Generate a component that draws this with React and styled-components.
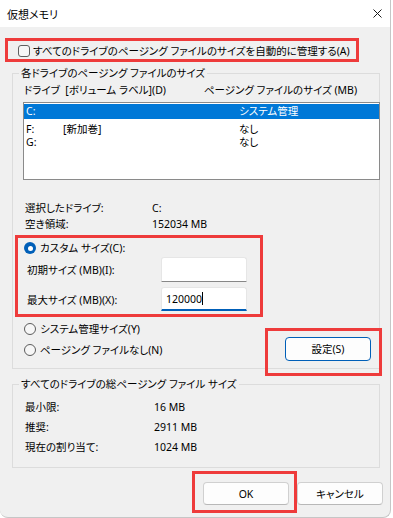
import React from "react";
import styled, { createGlobalStyle } from "styled-components";

const GlobalStyle = createGlobalStyle`
  html, body { margin: 0; padding: 0; background: #ffffff; }
  body {
    font-family: "Noto Sans", "Noto Sans CJK JP", sans-serif;
    font-size: 10.5px;
    color: #000000;
    font-feature-settings: "palt";
    -webkit-font-smoothing: antialiased;
  }
  * { box-sizing: border-box; }
`;

const Window = styled.div`
  width: 391px;
  height: 518px;
  background: #f0f0f0;
  border-right: 1px solid #c6c6c6;
  border-bottom: 1px solid #c6c6c6;
  border-radius: 0 0 8px 8px;
  overflow: hidden;
  display: flex;
  flex-direction: column;
`;

const TitleBar = styled.div`
  height: 27px;
  flex: none;
  background: #ffffff;
  display: flex;
  align-items: center;
  justify-content: space-between;
  padding: 0 8px 0 7px;
  font-size: 11px;
`;

const Content = styled.div`
  display: flex;
  flex-direction: column;
  padding: 17px 10px 0 12px;
`;

const Highlight = styled.div`
  position: relative;
  &::after {
    content: "";
    position: absolute;
    top: -${(p) => p.$t}px;
    right: -${(p) => p.$r}px;
    bottom: -${(p) => p.$b}px;
    left: -${(p) => p.$l}px;
    border: 3px solid #ee3b3b;
    pointer-events: none;
  }
`;

const CheckHighlight = styled(Highlight)`
  align-self: flex-start;
  margin-left: 6px;
`;

const CheckRow = styled.label`
  display: flex;
  align-items: center;
  gap: 3px;
  height: 14px;
  line-height: 14px;
  white-space: nowrap;
`;

const CheckBox = styled.span`
  width: 12px;
  height: 12px;
  border: 1px solid #5f5f5f;
  border-radius: 3px;
  background: #f6f6f6;
  flex: none;
`;

const GroupBox = styled.div`
  position: relative;
  margin-top: ${(p) => p.$mt}px;
  border: 1px solid #dcdcdc;
  padding: ${(p) => p.$pad};
`;

const Legend = styled.span`
  position: absolute;
  top: -8px;
  left: 6px;
  padding: 0 2px;
  line-height: 14px;
  background: #f0f0f0;
  white-space: nowrap;
`;

const HeaderRow = styled.div`
  display: grid;
  grid-template-columns: 180px 1fr;
  height: 14px;
  line-height: 14px;
  padding-left: 1px;
  white-space: nowrap;
`;

const ListBox = styled.div`
  margin-top: 5px;
  margin-right: -1px;
  height: 78px;
  border: 1px solid #8a8a8a;
  background: #ffffff;
  padding: 1px 0;
`;

const ListRow = styled.div`
  display: grid;
  grid-template-columns: 37px 176px 1fr;
  padding-left: 2px;
  height: ${(p) => (p.$selected ? 15 : 13)}px;
  line-height: ${(p) => (p.$selected ? 15 : 13)}px;
  margin-top: ${(p) => p.$mt || 0}px;
  background: ${(p) => (p.$selected ? "#0078d7" : "transparent")};
  color: ${(p) => (p.$selected ? "#ffffff" : "#000000")};
  white-space: nowrap;
`;

const InfoList = styled.div`
  margin-top: ${(p) => p.$mt}px;
  display: flex;
  flex-direction: column;
`;

const InfoRow = styled.div`
  display: grid;
  grid-template-columns: ${(p) => p.$label}px 1fr;
  height: ${(p) => p.$h}px;
  line-height: ${(p) => p.$h}px;
  padding-left: ${(p) => p.$pl}px;
  white-space: nowrap;
`;

const CustomBlock = styled(Highlight)`
  margin-top: 9px;
  width: 224px;
  display: flex;
  flex-direction: column;
`;

const RadioRow = styled.label`
  display: flex;
  align-items: center;
  gap: 4px;
  height: 14px;
  line-height: 14px;
  padding-left: 1px;
  white-space: nowrap;
`;

const Radio = styled.span`
  width: 12px;
  height: 12px;
  border-radius: 50%;
  flex: none;
  display: flex;
  align-items: center;
  justify-content: center;
  border: ${(p) => (p.$checked ? "none" : "1px solid #5c5c5c")};
  background: ${(p) => (p.$checked ? "#005fb8" : "#f6f6f6")};
  &::after {
    content: "";
    display: ${(p) => (p.$checked ? "block" : "none")};
    width: 5px;
    height: 5px;
    border-radius: 50%;
    background: #ffffff;
  }
`;

const FieldRow = styled.div`
  display: grid;
  grid-template-columns: 138px 86px;
  align-items: center;
  margin-top: ${(p) => p.$mt}px;
`;

const FieldLabel = styled.span`
  padding-left: 4px;
  white-space: nowrap;
`;

const Field = styled.div`
  height: ${(p) => (p.$focused ? 24 : 25)}px;
  background: #ffffff;
  border: 1px solid #e6e6e6;
  border-bottom: ${(p) => (p.$focused ? "2px solid #005fb8" : "1px solid #878787")};
  border-radius: 3px 3px 0 0;
  padding-left: 4px;
  display: flex;
  align-items: center;
  line-height: 14px;
`;

const Caret = styled.span`
  width: 1px;
  height: 13px;
  background: #000000;
`;

const BottomRow = styled.div`
  margin-top: 11px;
  display: flex;
  justify-content: space-between;
  align-items: flex-end;
  padding-right: 8px;
`;

const RadioColumn = styled.div`
  display: flex;
  flex-direction: column;
  gap: 7px;
  padding-bottom: 4px;
`;

const Button = styled.button`
  width: 86px;
  height: ${(p) => p.$h}px;
  padding: 0;
  font: inherit;
  color: #000000;
  background: #fdfdfd;
  border: 1px solid ${(p) => (p.$default ? "#005fb8" : "#d0d0d0")};
  border-bottom-color: ${(p) => (p.$default ? "#005fb8" : "#b8b8b8")};
  border-radius: 4px;
  line-height: 14px;
`;

const Footer = styled.div`
  margin-top: 14px;
  margin-right: -3px;
  display: flex;
  justify-content: flex-end;
  gap: 8px;
`;

const CloseIcon = () => (
  <svg width="9" height="9" viewBox="0 0 9 9">
    <path d="M0.5 0.5 L8.5 8.5 M8.5 0.5 L0.5 8.5" stroke="#1a1a1a" strokeWidth="1" fill="none" />
  </svg>
);

export default function App() {
  return (
    <>
      <GlobalStyle />
      <Window>
        <TitleBar>
          <span>仮想メモリ</span>
          <CloseIcon />
        </TitleBar>
        <Content>
          <CheckHighlight $t={6} $r={9} $b={4} $l={13}>
            <CheckRow>
              <CheckBox />
              <span>すべてのドライブのページング ファイルのサイズを自動的に管理する(A)</span>
            </CheckRow>
          </CheckHighlight>

          <GroupBox $mt={15} $pad="9px 0 7px 10px">
            <Legend>各ドライブのページング ファイルのサイズ</Legend>
            <HeaderRow>
              <span>ドライブ&nbsp;&nbsp;[ボリューム ラベル](D)</span>
              <span>ページング ファイルのサイズ (MB)</span>
            </HeaderRow>
            <ListBox>
              <ListRow $selected>
                <span>C:</span>
                <span></span>
                <span>システム管理</span>
              </ListRow>
              <ListRow $mt={4}>
                <span>F:</span>
                <span>[新加巻]</span>
                <span>なし</span>
              </ListRow>
              <ListRow>
                <span>G:</span>
                <span></span>
                <span>なし</span>
              </ListRow>
            </ListBox>

            <InfoList $mt={20}>
              <InfoRow $label={127} $h={16} $pl={2}>
                <span>選択したドライブ:</span>
                <span>C:</span>
              </InfoRow>
              <InfoRow $label={127} $h={16} $pl={2}>
                <span>空き領域:</span>
                <span>152034 MB</span>
              </InfoRow>
            </InfoList>

            <CustomBlock $t={6} $r={16} $b={6} $l={8}>
              <RadioRow>
                <Radio $checked />
                <span>カスタム サイズ(C):</span>
              </RadioRow>
              <FieldRow $mt={2}>
                <FieldLabel>初期サイズ (MB)(I):</FieldLabel>
                <Field />
              </FieldRow>
              <FieldRow $mt={5}>
                <FieldLabel>最大サイズ (MB)(X):</FieldLabel>
                <Field $focused>
                  <span>120000</span>
                  <Caret />
                </Field>
              </FieldRow>
            </CustomBlock>

            <BottomRow>
              <RadioColumn>
                <RadioRow>
                  <Radio />
                  <span>システム管理サイズ(Y)</span>
                </RadioRow>
                <RadioRow>
                  <Radio />
                  <span>ページング ファイルなし(N)</span>
                </RadioRow>
              </RadioColumn>
              <Highlight $t={9} $r={11} $b={15} $l={20}>
                <Button $h={24} $default>設定(S)</Button>
              </Highlight>
            </BottomRow>
          </GroupBox>

          <GroupBox $mt={15} $pad="12px 0 10px 12px">
            <Legend>すべてのドライブの総ページング ファイル サイズ</Legend>
            <InfoRow $label={129} $h={20} $pl={0}>
              <span>最小限:</span>
              <span>16 MB</span>
            </InfoRow>
            <InfoRow $label={129} $h={20} $pl={0}>
              <span>推奨:</span>
              <span>2911 MB</span>
            </InfoRow>
            <InfoRow $label={129} $h={20} $pl={0}>
              <span>現在の割り当て:</span>
              <span>1024 MB</span>
            </InfoRow>
          </GroupBox>

          <Footer>
            <Highlight $t={11} $r={8} $b={8} $l={11}>
              <Button $h={23}>OK</Button>
            </Highlight>
            <Button $h={23}>キャンセル</Button>
          </Footer>
        </Content>
      </Window>
    </>
  );
}
